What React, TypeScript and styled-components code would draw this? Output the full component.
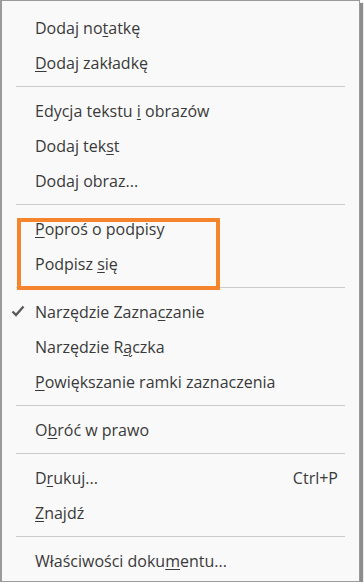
import React from "react";
import styled, { createGlobalStyle } from "styled-components";

const GlobalStyle = createGlobalStyle`
    html, body {
        margin: 0;
        padding: 0;
        background: #ffffff;
    }
`;

const Menu = styled.div`
    width: 360px;
    box-sizing: border-box;
    background: #f9f9f9;
    border: 1px solid #9a9a9a;
    border-left-width: 2px;
    box-shadow: 3px 3px 1px rgba(0, 0, 0, 0.45);
    padding: 9px 0 3px 0;
    font-family: "Open Sans", "Noto Sans", sans-serif;
    font-size: 16px;
    color: #3a3a3a;
`;

const Item = styled.div`
    position: relative;
    height: 35px;
    display: flex;
    align-items: center;
    justify-content: space-between;
    padding: 0 21px 0 33px;
    cursor: default;
`;

const Check = styled.span`
    position: absolute;
    left: 9px;
    top: 11px;
    display: flex;
`;

const Shortcut = styled.span`
    color: #3a3a3a;
`;

const Separator = styled.div`
    height: 13px;
    display: flex;
    align-items: center;
    padding: 0 14px 0 14px;
    &::after {
        content: "";
        flex: 1;
        height: 1px;
        background: #cbcbcb;
    }
`;

const Highlighted = styled.div`
    position: relative;
    &::after {
        content: "";
        position: absolute;
        left: 15px;
        top: 7px;
        width: 203px;
        height: 72px;
        box-sizing: border-box;
        border: 4px solid #f5842c;
        pointer-events: none;
    }
`;

const Key = styled.u`
    text-decoration-thickness: 1px;
    text-underline-offset: 2px;
`;

type Entry = { pre: string; key: string; post: string; shortcut?: string; checked?: boolean };

const items = (e: Entry) => (
    <Item key={e.pre + e.key + e.post}>
        {e.checked ? (
            <Check>
                <svg width="14" height="12" viewBox="0 0 14 12">
                    <path d="M1.5 6.5 L5 10 L12.5 1.5" fill="none" stroke="#5a5a5a" strokeWidth="2.4" />
                </svg>
            </Check>
        ) : null}
        <span>
            {e.pre}
            <Key>{e.key}</Key>
            {e.post}
        </span>
        {e.shortcut ? <Shortcut>{e.shortcut}</Shortcut> : null}
    </Item>
);

export default function App() {
    return (
        <>
            <GlobalStyle />
            <Menu>
                {items({ pre: "Dodaj no", key: "t", post: "atkę" })}
                {items({ pre: "", key: "D", post: "odaj zakładkę" })}
                <Separator />
                {items({ pre: "Edycja tekstu ", key: "i", post: " obrazów" })}
                {items({ pre: "Dodaj tek", key: "s", post: "t" })}
                {items({ pre: "Doda", key: "j", post: " obraz..." })}
                <Separator />
                <Highlighted>
                    {items({ pre: "", key: "P", post: "oproś o podpisy" })}
                    {items({ pre: "Podpisz ", key: "s", post: "ię" })}
                </Highlighted>
                <Separator />
                {items({ pre: "Narzędzie Zazna", key: "c", post: "zanie", checked: true })}
                {items({ pre: "Narzędzie R", key: "ą", post: "czka" })}
                {items({ pre: "", key: "P", post: "owiększanie ramki zaznaczenia" })}
                <Separator />
                {items({ pre: "O", key: "b", post: "róć w prawo" })}
                <Separator />
                {items({ pre: "D", key: "r", post: "ukuj...", shortcut: "Ctrl+P" })}
                {items({ pre: "", key: "Z", post: "najdź" })}
                <Separator />
                {items({ pre: "Właściwości doku", key: "m", post: "entu..." })}
            </Menu>
        </>
    );
}
